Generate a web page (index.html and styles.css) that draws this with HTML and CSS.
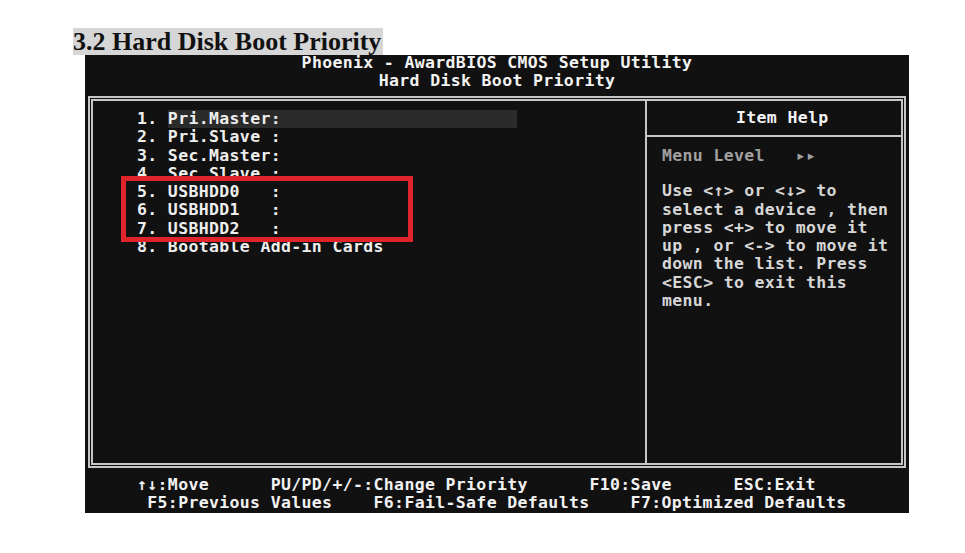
FILE: index.html
```html
<!DOCTYPE html>
<html lang="en">
<head>
    <meta charset="UTF-8">
    <meta name="viewport" content="width=device-width, initial-scale=1.0">
    <title>Hard Disk Boot Priority</title>
    <link rel="stylesheet" href="styles.css">
</head>
<body>
    <div class="doc">
        <h2 class="section-title">3.2 Hard Disk Boot Priority</h2>

        <div class="bios">
            <div class="bios-head">
                <div>Phoenix - AwardBIOS CMOS Setup Utility</div>
                <div>Hard Disk Boot Priority</div>
            </div>

            <div class="frame">
                <div class="boot-list">
                    <div class="row">1. <span class="item selected">Pri.Master:</span></div>
                    <div class="row">2. <span class="item">Pri.Slave :</span></div>
                    <div class="row">3. <span class="item">Sec.Master:</span></div>
                    <div class="row">4. <span class="item">Sec.Slave :</span></div>
                    <div class="row">5. <span class="item">USBHDD0   :</span></div>
                    <div class="row">6. <span class="item">USBHDD1   :</span></div>
                    <div class="row">7. <span class="item">USBHDD2   :</span></div>
                    <div class="row">8. <span class="item">Bootable Add-in Cards</span></div>
                </div>

                <div class="help">
                    <div class="help-title">Item Help</div>
                    <div class="help-body">
                        <div class="menu-level">Menu Level   ▸▸</div>
                        <div class="help-text">Use &lt;↑&gt; or &lt;↓&gt; to
select a device , then
press &lt;+&gt; to move it
up , or &lt;-&gt; to move it
down the list. Press
&lt;ESC&gt; to exit this
menu.</div>
                    </div>
                </div>
            </div>

            <div class="keys">↑↓:Move      PU/PD/+/-:Change Priority      F10:Save      ESC:Exit
 F5:Previous Values    F6:Fail-Safe Defaults    F7:Optimized Defaults</div>

            <!-- USB drives callout -->
            <div class="callout"></div>
        </div>
    </div>
</body>
</html>
```

FILE: styles.css
```css
body {
    margin: 0;
    background: #fff;
}
.doc {
    padding: 28px 0 0 73px;
}
.section-title {
    display: inline-block;
    margin: 0;
    height: 27px;
    line-height: 28px;
    padding-right: 2px;
    background: #d6d6d6;
    color: #111;
    font-family: "Liberation Serif", "Times New Roman", serif;
    font-size: 26px;
    font-weight: bold;
    vertical-align: top;
}

/* BIOS screen: 80 x 25 text grid */
.bios {
    position: relative;
    margin-left: 12px;
    width: 824px;
    height: 458px;
    background: #111;
    color: #eeeeee;
    font-family: "DejaVu Sans Mono", monospace;
    font-weight: bold;
    font-size: 16.5px;
    letter-spacing: 0.35px;
    line-height: 18.3px;
}
.bios-head {
    height: 41px;
    text-align: center;
    color: #f4f4f4;
}
.bios-head div {
    position: relative;
    top: -1px;
}
.frame {
    box-sizing: border-box;
    display: flex;
    margin-left: 3px;
    width: 818px;
    height: 372px;
    border: 5px double #c6c6c6;
}
.boot-list {
    box-sizing: border-box;
    width: 554px;
    padding: 9px 0 0 44px;
    border-right: 2px solid #c6c6c6;
}
.row {
    white-space: pre;
}
.item {
    display: inline-block;
    width: 349px;
}
.selected {
    background: #2b2b2b;
}
.help {
    flex: 1;
    display: flex;
    flex-direction: column;
}
.help-title {
    height: 34px;
    line-height: 34px;
    padding-left: 89px;
    border-bottom: 2px solid #c6c6c6;
    color: #f4f4f4;
}
.help-body {
    padding: 10px 0 0 15px;
}
.menu-level {
    white-space: pre;
    color: #a0a0a0;
    margin-bottom: 17px;
}
.help-text {
    white-space: pre;
    color: #d6d6d6;
}
.keys {
    margin-top: 8px;
    padding-left: 52px;
    white-space: pre;
    color: #f2f2f2;
}
.callout {
    position: absolute;
    left: 36px;
    top: 121px;
    width: 292px;
    height: 66px;
    border: 5.5px solid #e1232b;
    box-sizing: border-box;
}
```
